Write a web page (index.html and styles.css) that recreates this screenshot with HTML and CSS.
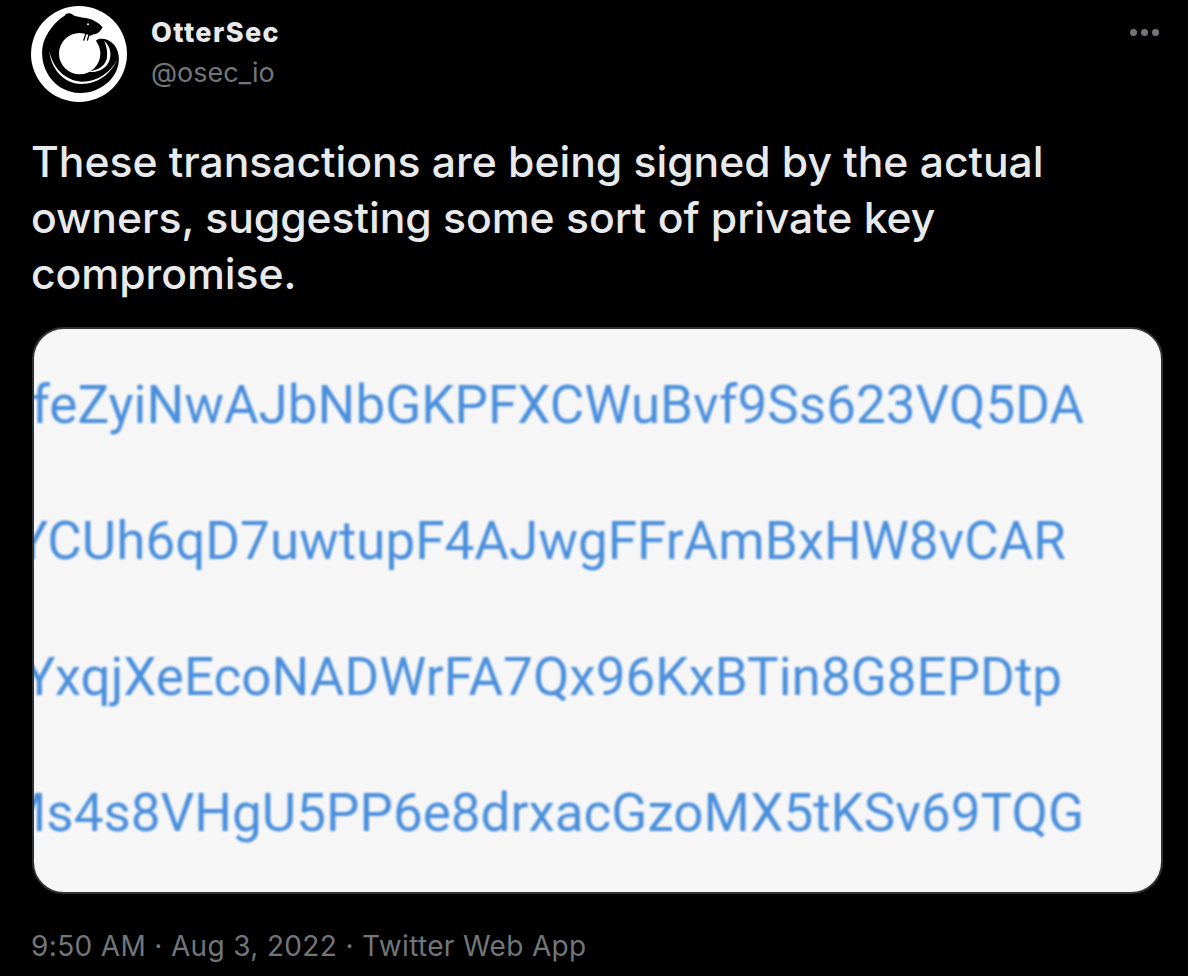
FILE: index.html
```html
<!DOCTYPE html>
<html lang="en">
<head>
<meta charset="utf-8">
<title>OtterSec tweet</title>
<link rel="stylesheet" href="styles.css">
</head>
<body>
<main class="tweet">
  <header class="author">
    <svg class="avatar" viewBox="9 12 288 288" aria-hidden="true">
      <circle cx="153" cy="156" r="144" fill="#fff"/>
      <path fill="#000" d="M224 76 C212 62 196 52 172 48 C158 46 146 44 136 40 C128 32 116 32 110 41 C84 56 62 84 50 112 C38 140 40 180 56 210 C76 250 116 274 160 273 C206 272 250 244 266 204 C278 176 274 140 252 122 C240 113 226 108 210 112 L185 130 L180 105 L196 97 C206 98 216 90 224 76 Z"/>
      <circle cx="155" cy="155" r="62" fill="#fff"/>
      <path fill="#fff" d="M64 148 C68 196 104 246 160 246 C208 246 248 218 268 172 C248 212 208 240 160 239 C112 236 76 200 64 148 Z"/>
      <path fill="#fff" d="M228 116 C246 132 252 154 244 176 C234 202 204 216 170 208 C200 210 228 198 236 172 C240 152 236 132 228 116 Z"/>
      <circle cx="180" cy="67" r="3" fill="#fff"/>
      <path fill="none" stroke="#000" stroke-width="4" d="M174 94 L167 116 M184 94 L178 116"/>
    </svg>
    <div class="names">
      <div class="display-name">OtterSec</div>
      <div class="handle">@osec_io</div>
    </div>
    <div class="more" aria-label="More"><span></span><span></span><span></span></div>
  </header>
  <p class="body-text">These transactions are being signed by the actual<br>owners, suggesting some sort of private key<br>compromise.</p>
  <figure class="media">
    <div class="addr addr-1">feZyiNwAJbNbGKPFXCWuBvf9Ss623VQ5DA</div>
    <div class="addr addr-2">YCUh6qD7uwtupF4AJwgFFrAmBxHW8vCAR</div>
    <div class="addr addr-3">YxqjXeEcoNADWrFA7Qx96KxBTin8G8EPDtp</div>
    <div class="addr addr-4">Ms4s8VHgU5PP6e8drxacGzoMX5tKSv69TQG</div>
  </figure>
  <footer class="meta">9:50 AM · Aug 3, 2022 · Twitter Web App</footer>
</main>
</body>
</html>
```
FILE: styles.css
```css
html, body {
  margin: 0;
  background: #000;
}
body {
  width: 1188px;
  height: 976px;
  overflow: hidden;
  font-family: Inter, "Liberation Sans", sans-serif;
}
.tweet {
  padding: 6px 26px 0 32px;
  display: flex;
  flex-direction: column;
}
.author {
  display: flex;
  align-items: flex-start;
  height: 96px;
}
.avatar {
  width: 96px;
  height: 96px;
  margin-left: -1px;
  flex: none;
}
.names {
  margin-left: 24px;
  flex: 1;
  padding-top: 9px;
}
.display-name {
  color: #e7e9ea;
  font-size: 27px;
  font-weight: 800;
  letter-spacing: 1.4px;
  line-height: 36px;
}
.handle {
  color: #71767b;
  font-size: 27px;
  line-height: 40px;
  padding-top: 2px;
}
.more {
  display: flex;
  gap: 4px;
  margin: 23px 3px 0 0;
}
.more span {
  width: 7px;
  height: 7px;
  border-radius: 50%;
  background: #71767b;
}
.body-text {
  margin: 32px 0 0 -1px;
  color: #e7e9ea;
  font-size: 42.7px;
  font-weight: 450;
  letter-spacing: -0.05px;
  line-height: 56px;
  white-space: nowrap;
}
.media {
  margin: 25px 0 0;
  width: 1131px;
  height: 567px;
  box-sizing: border-box;
  border: 2px solid #2f3336;
  border-radius: 32px;
  background: #f6f6f7;
  overflow: hidden;
  display: flex;
  flex-direction: column;
  padding-top: 50px;
  gap: 83px;
}
.addr {
  display: flex;
  justify-content: flex-end;
  color: #4a8fdc;
  font-family: Roboto, "Liberation Sans", sans-serif;
  font-size: 53px;
  line-height: 53px;
  white-space: nowrap;
  filter: blur(0.8px);
}
.addr-1 { padding-right: 77px; }
.addr-2 { padding-right: 95px; }
.addr-3 { padding-right: 99px; }
.addr-4 { padding-right: 77px; }
.meta {
  margin: 34px 0 0 -1px;
  color: #71767b;
  font-size: 28px;
  letter-spacing: 0.35px;
  line-height: 36px;
  white-space: nowrap;
}
```
